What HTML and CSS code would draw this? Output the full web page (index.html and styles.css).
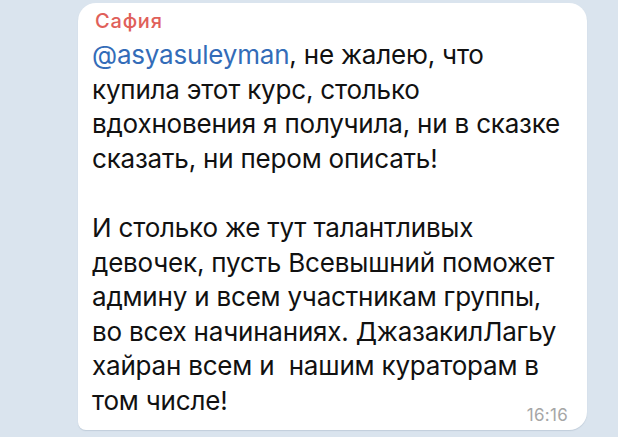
FILE: index.html
```html
<!DOCTYPE html>
<html lang="ru">
<head>
<meta charset="utf-8">
<link rel="stylesheet" href="styles.css">
</head>
<body>
<div class="chat">
  <div class="bubble">
    <div class="name">Сафия</div>
    <div class="text"><span class="mention">@asyasuleyman</span>, не жалею, что<br>купила этот курс, столько<br>вдохновения я получила, ни в сказке<br>сказать, ни пером описать!<br><br>И столько же тут талантливых<br>девочек, пусть Всевышний поможет<br>админу и всем участникам группы,<br>во всех начинаниях. ДжазакилЛагьу<br>хайран всем и&nbsp; нашим кураторам в<br>том числе!</div>
    <div class="time">16:16</div>
  </div>
</div>
</body>
</html>
```
FILE: styles.css
```css
html, body {
  margin: 0;
  padding: 0;
}
body {
  width: 618px;
  height: 437px;
  overflow: hidden;
  background: #dae4ee;
}
.chat {
  padding: 3px 0 0 78px;
}
.bubble {
  position: relative;
  box-sizing: border-box;
  width: 509px;
  height: 427px;
  background: #ffffff;
  border-radius: 18px 18px 18px 8px;
  padding: 5px 12px 0 14px;
  box-shadow: 0 1px 1px rgba(120, 140, 160, 0.25);
  font-family: Inter, "Liberation Sans", sans-serif;
}
.name {
  font-size: 20px;
  line-height: 27px;
  color: #e0605a;
  font-weight: 500;
  letter-spacing: 0.8px;
  padding-left: 3px;
  margin-bottom: 3px;
}
.text {
  font-size: 26px;
  line-height: 34.6px;
  color: #111111;
  letter-spacing: -0.2px;
}
.mention {
  color: #336cb8;
}
.time {
  position: absolute;
  right: 19px;
  bottom: 5px;
  font-size: 17px;
  letter-spacing: 0.3px;
  color: #a6a6a6;
}
```
